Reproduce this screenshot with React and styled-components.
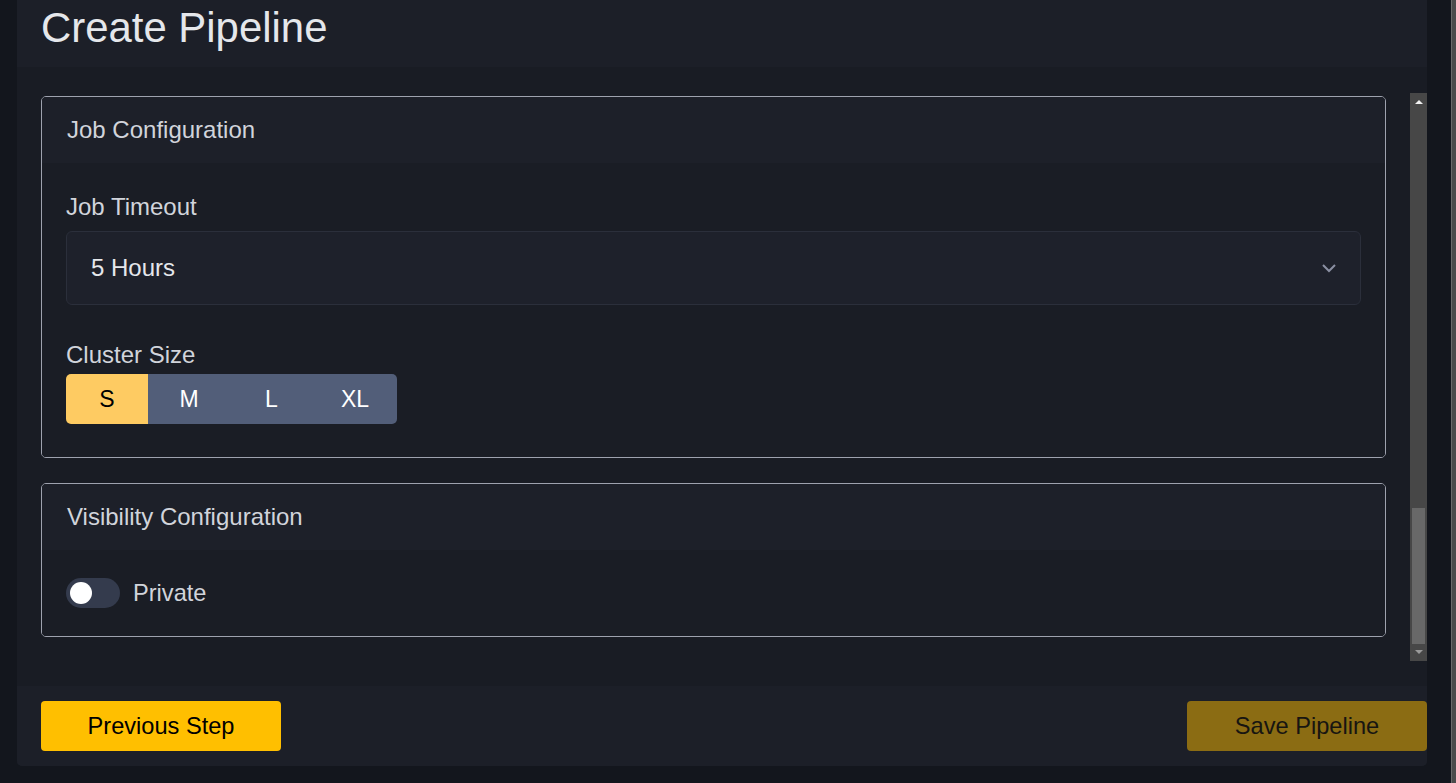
import React, { useState } from "react";
import styled, { createGlobalStyle } from "styled-components";

const GlobalStyle = createGlobalStyle`
  html, body {
    margin: 0;
    padding: 0;
    height: 100%;
    overflow: hidden;
    background: #13161d;
    font-family: "Liberation Sans", Arial, sans-serif;
  }
  #root {
    height: 100%;
  }
`;

const Page = styled.div`
  height: 783px;
  display: flex;
  padding-left: 17px;
  box-sizing: border-box;
  background: #13161d;
`;

const Card = styled.div`
  width: 1410px;
  height: 766px;
  display: flex;
  flex-direction: column;
  background: #1c1f28;
  border-radius: 0 0 5px 5px;
  overflow: hidden;
`;

const Spacer = styled.div`
  flex: 1;
`;

const PageScrollEdge = styled.div`
  width: 5px;
  background: #4b4b4b;
  border-left: 1px solid #6a6a6a;
  box-sizing: border-box;
`;

const Header = styled.div`
  height: 67px;
  padding: 3px 24px 0;
  box-sizing: border-box;
  background: #1c1f28;
`;

const Title = styled.h1`
  margin: 0;
  font-size: 41.9px;
  line-height: 50px;
  font-weight: 400;
  color: #e5e7eb;
`;

const Body = styled.div`
  flex: 1;
  min-height: 0;
  display: flex;
  padding: 26px 0 25px 24px;
  background: #191c24;
`;

const ScrollArea = styled.div`
  flex: 1;
  min-height: 0;
  overflow: hidden;
  display: flex;
  flex-direction: column;
  justify-content: flex-end;
  gap: 25px;
  padding: 0 24px 24px 0;
`;

const Scrollbar = styled.div`
  width: 17px;
  display: flex;
  flex-direction: column;
  background: #474747;
`;

const ScrollButton = styled.div`
  height: 17px;
  display: flex;
  align-items: center;
  justify-content: center;
  flex-shrink: 0;
`;

const ScrollTrack = styled.div`
  flex: 1;
  display: flex;
  flex-direction: column;
  justify-content: flex-end;
  padding: 0 2px;
`;

const ScrollThumb = styled.div`
  height: 136px;
  background: #686868;
`;

const Section = styled.section`
  border: 1px solid #9ea2ae;
  border-radius: 5px;
  overflow: hidden;
  flex-shrink: 0;
`;

const SectionHeader = styled.div`
  height: 66px;
  display: flex;
  align-items: center;
  padding: 0 25px;
  background: #1d2029;
  font-size: 24px;
  color: #d1d4db;
`;

const SectionBody = styled.div`
  padding: ${(p) => p.$pad || "30px 24px 33px"};
  background: #1a1d25;
`;

const Label = styled.div`
  font-size: 24px;
  line-height: 28px;
  color: #d1d4db;
  margin-top: ${(p) => p.$top || 0}px;
  margin-bottom: ${(p) => p.$bottom || 0}px;
`;

const Select = styled.div`
  height: 74px;
  box-sizing: border-box;
  display: flex;
  align-items: center;
  justify-content: space-between;
  padding: 0 23px 0 24px;
  background: #1e212b;
  border: 1px solid #2b2f3b;
  border-radius: 6px;
  font-size: 24px;
  color: #e5e7eb;
`;

const SizeGroup = styled.div`
  display: inline-flex;
  border-radius: 5px;
  overflow: hidden;
`;

const SizeButton = styled.button`
  width: ${(p) => p.$w}px;
  height: 50px;
  border: none;
  padding: 0;
  font-family: inherit;
  font-size: 23px;
  background: ${(p) => (p.$active ? "#fecb62" : "#525e79")};
  color: ${(p) => (p.$active ? "#000" : "#fff")};
  cursor: pointer;
`;

const ToggleRow = styled.label`
  display: flex;
  align-items: center;
  gap: 13px;
  font-size: 23.6px;
  color: #d1d4db;
  cursor: pointer;
`;

const Track = styled.span`
  width: 54px;
  height: 30px;
  border-radius: 15px;
  background: ${(p) => (p.$on ? "#fecb62" : "#343b4d")};
  display: flex;
  align-items: center;
  padding: 0 4px;
  box-sizing: border-box;
  justify-content: ${(p) => (p.$on ? "flex-end" : "flex-start")};
`;

const Knob = styled.span`
  width: 22px;
  height: 22px;
  border-radius: 50%;
  background: #fff;
`;

const Footer = styled.div`
  height: 80px;
  display: flex;
  align-items: center;
  justify-content: space-between;
  padding: 0 0 0 24px;
  background: #1c1f28;
`;

const ActionButton = styled.button`
  width: 240px;
  height: 50px;
  border: none;
  border-radius: 4px;
  font-family: inherit;
  font-size: 23.6px;
  background: ${(p) => (p.$muted ? "#8b6c13" : "#ffbf00")};
  color: ${(p) => (p.$muted ? "#171511" : "#000")};
  cursor: pointer;
`;

const Chevron = () => (
  <svg width="16" height="10" viewBox="0 0 16 10" fill="none">
    <polyline points="2,2 8,8 14,2" stroke="#8a8fa2" strokeWidth="2" />
  </svg>
);

const Arrow = ({ up, color }) => (
  <svg width="8" height="5" viewBox="0 0 8 5">
    <polygon points={up ? "0,5 4,1 8,5" : "0,0 4,4 8,0"} fill={color} />
  </svg>
);

const sizes = [
  { key: "S", w: 82 },
  { key: "M", w: 82 },
  { key: "L", w: 83 },
  { key: "XL", w: 84 },
];

export default function App() {
  const [size, setSize] = useState("S");
  const [isPrivate, setPrivate] = useState(false);

  return (
    <>
      <GlobalStyle />
      <Page>
        <Card>
          <Header>
            <Title>Create Pipeline</Title>
          </Header>
          <Body>
            <ScrollArea>
              <Section>
                <SectionHeader>Job Configuration</SectionHeader>
                <SectionBody>
                  <Label $bottom={10}>Job Timeout</Label>
                  <Select>
                    <span>5 Hours</span>
                    <Chevron />
                  </Select>
                  <Label $top={36} $bottom={5}>
                    Cluster Size
                  </Label>
                  <SizeGroup>
                    {sizes.map((s) => (
                      <SizeButton
                        key={s.key}
                        $w={s.w}
                        $active={size === s.key}
                        onClick={() => setSize(s.key)}
                      >
                        {s.key}
                      </SizeButton>
                    ))}
                  </SizeGroup>
                </SectionBody>
              </Section>
              <Section>
                <SectionHeader>Visibility Configuration</SectionHeader>
                <SectionBody $pad="28px 24px 28px">
                  <ToggleRow onClick={() => setPrivate(!isPrivate)}>
                    <Track $on={isPrivate}>
                      <Knob />
                    </Track>
                    Private
                  </ToggleRow>
                </SectionBody>
              </Section>
            </ScrollArea>
            <Scrollbar>
              <ScrollButton>
                <Arrow up color="#f0f0f0" />
              </ScrollButton>
              <ScrollTrack>
                <ScrollThumb />
              </ScrollTrack>
              <ScrollButton>
                <Arrow color="#9a9a9a" />
              </ScrollButton>
            </Scrollbar>
          </Body>
          <Footer>
            <ActionButton>Previous Step</ActionButton>
            <ActionButton $muted>Save Pipeline</ActionButton>
          </Footer>
        </Card>
        <Spacer />
        <PageScrollEdge />
      </Page>
    </>
  );
}
